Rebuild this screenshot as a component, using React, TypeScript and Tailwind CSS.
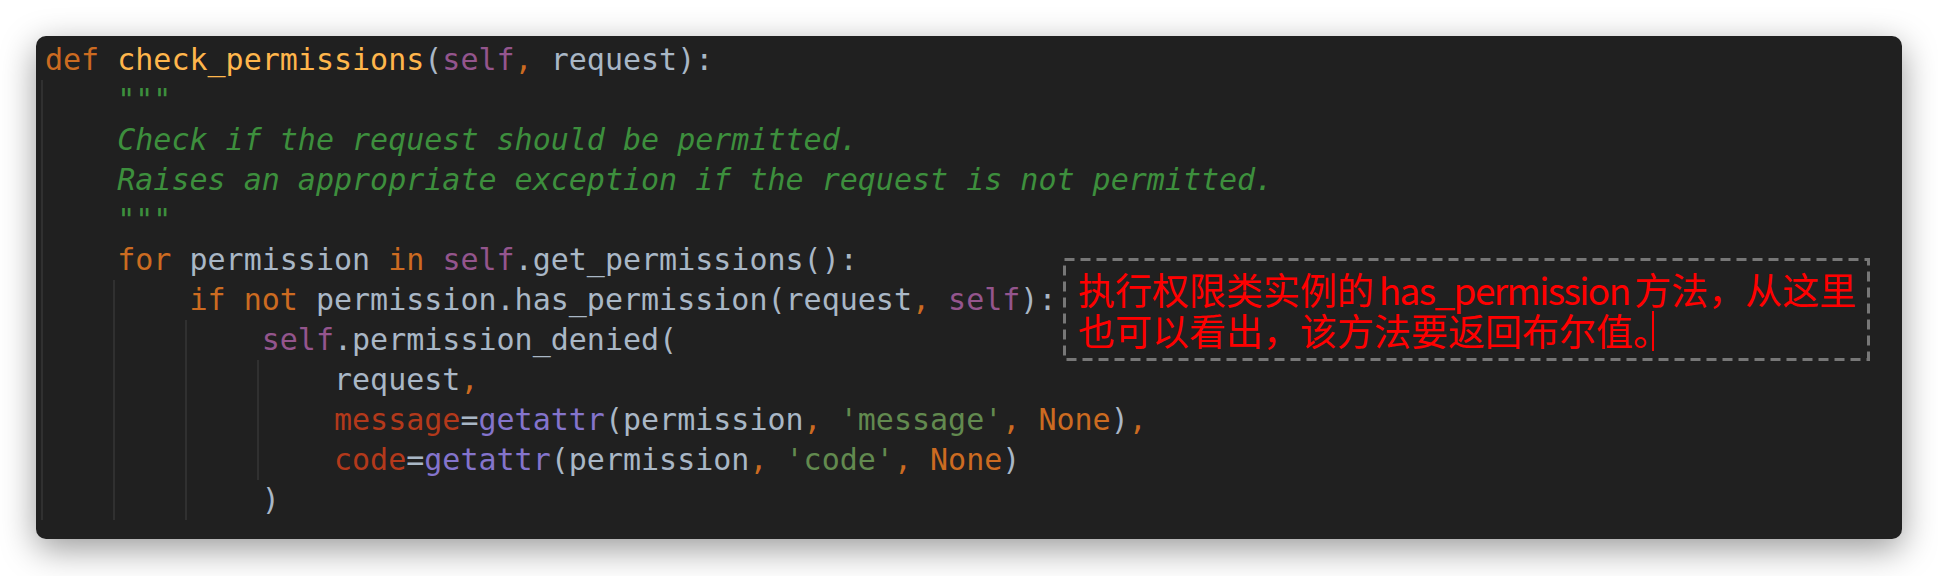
const kw = "text-[#cc6b21]";
const fn = "text-[#ffb64c]";
const tx = "text-[#a9b7c6]";
const sf = "text-[#94558d]";
const doc = "text-[#3d8f3d] italic";
const kwarg = "text-[#b3391b]";
const bi = "text-[#8474cc]";
const str = "text-[#628a4f]";

type Tok = [string, string];

const lines: Tok[][] = [
  [["def", kw], [" ", tx], ["check_permissions", fn], ["(", tx], ["self", sf], [",", kw], [" request):", tx]],
  [["    \"\"\"", doc]],
  [["    Check if the request should be permitted.", doc]],
  [["    Raises an appropriate exception if the request is not permitted.", doc]],
  [["    \"\"\"", doc]],
  [["    ", tx], ["for", kw], [" permission ", tx], ["in", kw], [" ", tx], ["self", sf], [".get_permissions():", tx]],
  [["        ", tx], ["if", kw], [" ", tx], ["not", kw], [" permission.has_permission(request", tx], [",", kw], [" ", tx], ["self", sf], ["):", tx]],
  [["            ", tx], ["self", sf], [".permission_denied(", tx]],
  [["                request", tx], [",", kw]],
  [["                ", tx], ["message", kwarg], ["=", tx], ["getattr", bi], ["(permission", tx], [",", kw], [" ", tx], ["'message'", str], [",", kw], [" ", tx], ["None", kw], [")", tx], [",", kw]],
  [["                ", tx], ["code", kwarg], ["=", tx], ["getattr", bi], ["(permission", tx], [",", kw], [" ", tx], ["'code'", str], [",", kw], [" ", tx], ["None", kw], [")", tx]],
  [["            )", tx]],
];

// indent guides: left / top / height inside the panel
const guides = [
  "left-[5px] top-[44px] h-[440px]",
  "left-[77px] top-[244px] h-[240px]",
  "left-[149px] top-[284px] h-[200px]",
  "left-[221px] top-[324px] h-[120px]",
];

function Note() {
  return (
    <div className="absolute left-[1027px] top-[222px] w-[807px] h-[103px]">
      <svg className="absolute inset-0" width="807" height="103">
        <rect x="1.5" y="1.5" width="804" height="100" fill="none" stroke="#777777" strokeWidth="3" strokeDasharray="10 6" />
      </svg>
      <div className="relative pl-[15px] pt-[11px] text-[37px] leading-[41px] text-[#ff0000] font-['Noto_Sans_CJK_SC',sans-serif]">
        <div className="whitespace-nowrap">
          执行权限类实例的<span className="tracking-[-1.6px] [word-spacing:-2px]"> has_permission </span>方法，从这里
        </div>
        <div className="whitespace-nowrap flex items-center">
          也可以看出，该方法要返回布尔值。
          <span className="inline-block w-[2px] h-[40px] bg-[#ff0000] -ml-[18px]" />
        </div>
      </div>
    </div>
  );
}

export default function App() {
  return (
    <div className="w-full h-[576px] bg-white pt-[36px] pl-[36px] overflow-hidden">
      <div className="relative w-[1866px] h-[503px] rounded-[10px] bg-[#202020] shadow-[0_10px_35px_rgba(0,0,0,0.4)] pt-[4px] pl-[9px]">
        {guides.map((g) => (
          <div key={g} className={`absolute w-[2px] bg-[#303030] ${g}`} />
        ))}
        <div className="relative font-['DejaVu_Sans_Mono',monospace] text-[30px] leading-[40px]">
          {lines.map((line, i) => (
            <div key={i} className="h-[40px] whitespace-pre">
              {line.map(([t, c], j) => (
                <span key={j} className={c}>
                  {t}
                </span>
              ))}
            </div>
          ))}
        </div>
        <Note />
      </div>
    </div>
  );
}
